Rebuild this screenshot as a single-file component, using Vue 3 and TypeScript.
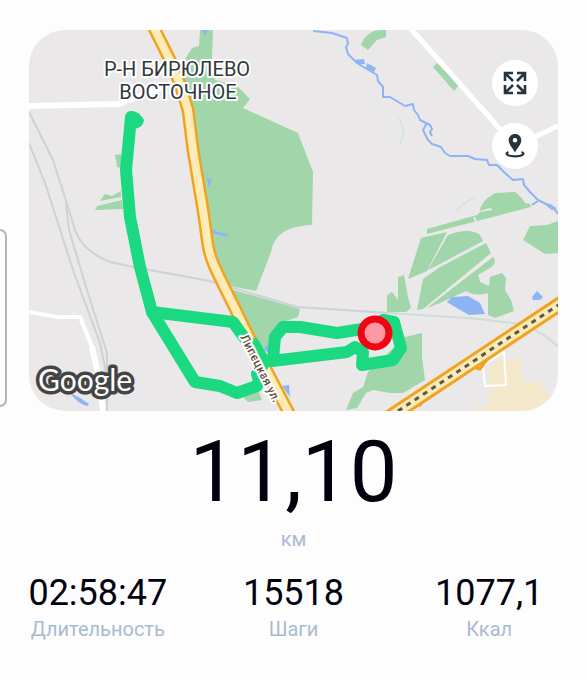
<script setup lang="ts">
interface Stat {
  value: string
  label: string
}

const distance = '11,10'
const stats: Stat[] = [
  { value: '02:58:47', label: 'Длительность' },
  { value: '15518', label: 'Шаги' },
  { value: '1077,1', label: 'Ккал' },
]

const parks: string[] = [
  'M200 30H213L212 58 215 80 237 86 250 99 243 108 298 133 313 172 312 225Q290 226 281 234 273 240 271 252L256 291 230 286 210 250 190 110 178 70 192 48 199 46Z',
  'M230 289 255 296 300 309 298 317 283 322 273 333 268 352 250 335Z',
  'M115 155 121 154 121 168 117 167Z',
  'M100 201 105 194 112 196 121 191V197Z',
  'M95 210 97 206 122 200 123 209Z',
  'M361 45Q366 31 380 30H386V37L377 40 368 50Z',
  'M433 67 437 63 459 85 454 91Z',
  'M427 229 477 215 480 212 493 210 490 208 480 211Q480 202 495 193L515 192Q523 198 525 203L530 204 531 207 427 234Z',
  'M421 238 447 232 427 271 408 279Z',
  'M428 270 448 235Q470 227 480 235L483 241 440 264Z',
  'M423 279 440 267 486 243 491 253 423 309 417 310Z',
  'M427 308 493 257Q498 262 490 268L478 275 480 282 489 286 490 277 502 273 506 278 505 290 511 300 514 311 495 318 488 315 488 293Q476 297 466 291L440 303Z',
  'M387 312V295L392 292 398 300V277L404 275 408 297 411 308 406 312Z',
  'M523 240 530 226 547 225 558 221V253L545 254Z',
  'M368 372 405 337 422 333V357L425 380 403 393 390 393 373 390 366 393 357 408 346 410 353 393 363 387Z',
  'M243 397 258 390 262 400 248 402Z',
]

const ponds: string[] = [
  'M447 302 452 297 468 296 480 303 485 314 469 315 455 307Z',
  'M532 297 537 291 543 297 540 300H533Z',
  'M354 60 364 59 365 64 358 64Z',
  'M367 63 376 68 374 72 366 68Z',
  'M207 178 212 180 209 188Z',
  'M213 229 218 232 228 234 227 237 212 233Z',
  'M282 386 289 385 290 397Z',
  'M265 347 269 345V353L264 350Z',
  'M70 393Q80 397 89 404L88 406Q79 405 70 393Z',
  'M202 30H208L205 36Z',
]

const rails: string[] = [
  'M29 112 53 160 67 204 75 230Q80 242 87 248 97 257 110 262L133 267 210 281 230 287 297 307 390 313',
  'M29 143 45 183 57 220 73 270 100 343 106 372',
  'M66 204 69 230 87 290 107 353V411',
]
</script>

<template>
  <main class="workout">
    <div class="edge-panel" aria-hidden="true"></div>
    <section class="map" aria-label="Карта маршрута">
      <svg class="map-canvas" viewBox="29 30 529 381" role="img" aria-label="Маршрут">
        <rect x="29" y="30" width="529" height="381" fill="#eae8e9" />
        <path d="M489 367 503 353 506 361 522 359V381L541 382 543 391 554 397 530 411H470L489 405Z" fill="#f3e8ca" />
        <path v-for="d in parks" :key="d" :d="d" fill="#a1d5aa" />
        <path d="M474 217 477 224" stroke="#eae8e9" stroke-width="2" />
        <path v-for="d in ponds" :key="d" :d="d" fill="#8db4f5" />

        <g fill="none" stroke-linejoin="round">
          <path d="M399 118Q407 132 399 145M455 213Q463 202 474 198" stroke="#d7e5e0" stroke-width="2" />
          <path v-for="d in rails" :key="d" :d="d" stroke="#ccd2d6" stroke-width="2" />
          <path d="M390 313 480 319 513 323Q540 328 558 347" stroke="#ccded8" stroke-width="2" />
          <path
            d="M313 31 332 33 347 38 348 44 346 47 348 54 357 63 377 75 378 81 383 87V97H390L405 106 413 104 414 110 418 115 420 120 430 125 432 129 430 132 432 136M427 123 423 130 428 140 432 144 441 147 445 153 450 156H468L475 159 487 160 489 165H497L506 174 513 180 523 179 524 185 530 192 538 200 546 204 552 206 558 214M532 205 538 201M546 204 552 209 556 208"
            stroke="#8db4f5" stroke-width="2"
          />
          <g stroke="#fff">
            <path d="M29 106 118 104 140 96 180 80" stroke-width="6" />
            <path d="M411 29 436 57 515 146 558 126" stroke-width="5" />
            <path d="M29 312 58 317H80L92 347 98 373" stroke-width="4" />
            <path d="M92 347 99 378 103 411" stroke-width="6" />
            <path d="M483 366 504 352 506 385 485 386Z" stroke-width="2" />
          </g>
          <path d="M413 405H420L424 398M473 367 480 369 488 358" stroke="#efa421" stroke-width="3" />
          <path d="M388 418 566 300" stroke="#efa421" stroke-width="15" />
          <path d="M388 418 566 300" stroke="#fbeab5" stroke-width="9" />
          <path d="M398 411 566 300" stroke="#565b50" stroke-width="3" stroke-dasharray="5 5" />
          <path d="M152 24 171 62 180 84 188 110 193 150 198 180 203 210 208 245Q210 258 218 274L249 337 291 417" stroke="#efa421" stroke-width="13" />
          <path d="M152 24 171 62 180 84 188 110 193 150 198 180 203 210 208 245Q210 258 218 274L249 337 291 417" stroke="#ffebb5" stroke-width="8" />
          <g stroke="#1bd981" stroke-width="12" stroke-linecap="round">
            <path d="M131 117 126 170 130 217 140 267 152 312 233 322 243 336 263 361 272 361 347 352 355 347 363 352 362 365 393 360 401 348 394 322 383 320" />
            <path d="M273 359 275 337 283 327H300L337 333 375 327" />
            <path d="M152 312 195 382 220 386 237 393 257 386 259 380 257 374 264 363" />
            <path d="M254 344 262 358" />
          </g>
        </g>
        <path d="M131 111Q139 111 144 120 143 128 134 129L126 118Z" fill="#1bd981" />
        <circle cx="375" cy="333" r="14" fill="#ff98a5" stroke="#f40412" stroke-width="7" />

        <g class="district">
          <text x="177" y="76">Р-Н БИРЮЛЕВО</text>
          <text x="178" y="99">ВОСТОЧНОЕ</text>
        </g>
        <path id="street-line" d="M240 337Q257 370 278 412" fill="none" />
        <text class="street"><textPath href="#street-line">Липецкая ул.</textPath></text>
        <text class="brand" x="38" y="391">Google</text>
      </svg>

      <div class="map-actions">
        <button type="button" class="round-button" aria-label="Развернуть карту">
          <svg viewBox="0 0 24 24" width="24" height="24" fill="none" stroke="#27343c" stroke-width="2.6">
            <path d="M10 2H2V10M2 2 10 10M14 2H22V10M22 2 14 10M10 22H2V14M2 22 10 14M14 22H22V14M22 22 14 14" />
          </svg>
        </button>
        <button type="button" class="round-button" aria-label="Моё местоположение">
          <svg viewBox="0 0 24 24" width="24" height="24">
            <path d="M12 0C8.300 0 5.700 2.700 5.700 6.200 5.700 10.500 9.500 13.500 12 18.500 14.500 13.500 18.300 10.500 18.300 6.200 18.300 2.700 15.700 0 12 0ZM12 4A2.300 2.300 0 1 1 12 8.600 2.300 2.300 0 0 1 12 4Z" fill="#27343c" fill-rule="evenodd" />
            <path d="M5.500 18C1 19.800 5 22.300 12 22.300S23 19.800 18.500 18" fill="none" stroke="#27343c" stroke-width="2.200" />
          </svg>
        </button>
      </div>
    </section>

    <section class="distance">
      <strong class="distance-value">{{ distance }}</strong>
      <span class="caption">км</span>
    </section>

    <dl class="stats">
      <div v-for="stat in stats" :key="stat.label" class="stat">
        <dt class="caption">{{ stat.label }}</dt>
        <dd class="stat-value">{{ stat.value }}</dd>
      </div>
    </dl>
  </main>
</template>

<style>
body {
  margin: 0;
  background: #fdfdfd;
}
</style>

<style scoped>
.workout {
  position: relative;
  display: flex;
  flex-direction: column;
  padding-top: 30px;
  overflow: hidden;
  font-family: Roboto, "Liberation Sans", sans-serif;
  color: #02020f;
}

.edge-panel {
  position: absolute;
  top: 229px;
  left: -20px;
  box-sizing: border-box;
  width: 27px;
  height: 178px;
  border: 2px solid #b5b5b5;
  border-radius: 7px;
}

.map {
  position: relative;
  margin: 0 29px;
  overflow: hidden;
  border-radius: 36px;
}

.map-canvas {
  display: block;
  width: 100%;
}

.district {
  fill: #30393d;
  stroke: #fff;
  stroke-width: 4px;
  stroke-linejoin: round;
  paint-order: stroke;
  font-size: 20px;
  text-anchor: middle;
}

.street {
  fill: #594a35;
  stroke: #fff;
  stroke-width: 4px;
  stroke-linejoin: round;
  paint-order: stroke;
  font-size: 12px;
  font-weight: 500;
}

.brand {
  fill: #fff;
  stroke: #444;
  stroke-width: 7px;
  stroke-linejoin: round;
  paint-order: stroke;
  font-family: Lato, sans-serif;
  font-size: 30px;
}

.map-actions {
  position: absolute;
  top: 30px;
  right: 20px;
  display: flex;
  flex-direction: column;
  gap: 17px;
}

.round-button {
  display: grid;
  place-items: center;
  width: 46px;
  height: 46px;
  padding: 0;
  border: 0;
  border-radius: 50%;
  background: #fff;
}

.distance {
  display: flex;
  flex-direction: column;
  align-items: center;
  padding-top: 11px;
}

.distance-value {
  font-size: 85px;
  font-weight: 400;
  line-height: 100px;
}

.caption {
  font-size: 20px;
  line-height: 24px;
  color: #a9bbd0;
}

.distance .caption {
  margin-top: 5px;
}

.stats {
  display: grid;
  grid-template-columns: repeat(3, 1fr);
  margin: 20px 0 0;
}

.stat {
  display: flex;
  flex-direction: column-reverse;
  align-items: center;
  gap: 2px;
}

.stat-value {
  margin: 0;
  font-size: 36px;
  line-height: 44px;
}
</style>
